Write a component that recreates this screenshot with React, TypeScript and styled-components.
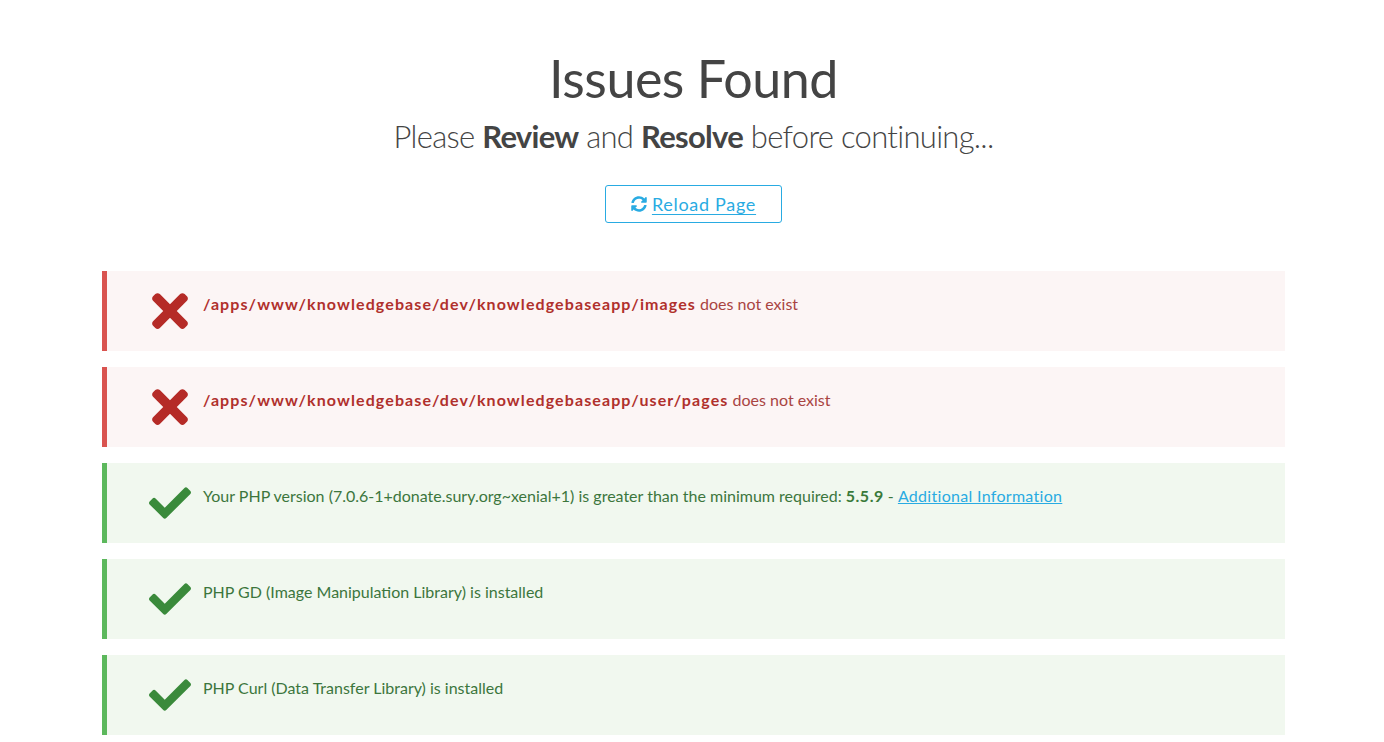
import React from "react";
import styled, { createGlobalStyle } from "styled-components";
import { FaTimes, FaCheck, FaSyncAlt } from "react-icons/fa";

const Global = createGlobalStyle`
  html, body { margin: 0; padding: 0; background: #fff; }
  body { font-family: "Lato", "Open Sans", sans-serif; color: #444; }
`;

const Page = styled.div`
  padding: 0 99px 40px 102px;
  display: flex;
  flex-direction: column;
  align-items: center;
`;

const Title = styled.h1`
  margin: 46px 0 0;
  font-family: "Lato", sans-serif;
  font-weight: 400;
  font-size: 52px;
  line-height: 64px;
  color: #444;
  letter-spacing: -0.5px;
`;

const Subtitle = styled.h2`
  margin: 6px 0 0;
  font-family: "Lato", sans-serif;
  font-weight: 300;
  font-size: 31px;
  line-height: 40px;
  color: #444;
  letter-spacing: -0.7px;
  b { font-weight: 700; }
`;

const ReloadButton = styled.a`
  margin-top: 29px;
  box-sizing: border-box;
  width: 177px;
  height: 38px;
  display: flex;
  align-items: center;
  justify-content: center;
  gap: 5px;
  border: 1px solid #29abe2;
  border-radius: 3px;
  color: #29abe2;
  font-size: 18px;
  letter-spacing: 0.7px;
  text-decoration: underline;
  text-underline-offset: 3px;
  text-decoration-thickness: 1px;
  svg { width: 16px; height: 16px; }
`;

const List = styled.div`
  align-self: stretch;
  margin-top: 48px;
  display: flex;
  flex-direction: column;
  gap: 16px;
`;

const Panel = styled.div<{ $ok: boolean }>`
  height: 80px;
  box-sizing: border-box;
  border-left: 5px solid ${(p) => (p.$ok ? "#5cb85c" : "#d9534f")};
  background: ${(p) => (p.$ok ? "#f1f8ef" : "#fcf5f5")};
  display: flex;
  align-items: stretch;
  padding-left: 32px;
  color: ${(p) => (p.$ok ? "#3c763d" : "#a94442")};
  font-size: 16px;
  line-height: 20px;
`;

const IconBox = styled.div<{ $ok: boolean }>`
  width: 62px;
  flex: none;
  display: flex;
  justify-content: center;
  align-items: center;
  color: ${(p) => (p.$ok ? "#3a8a3b" : "#b52b27")};
  svg {
    width: ${(p) => (p.$ok ? "42px" : "36px")};
    height: ${(p) => (p.$ok ? "42px" : "52px")};
  }
`;

const Message = styled.div`
  padding: 23px 0 0 2px;
  b { font-weight: 700; color: #b0302c; letter-spacing: 1.1px; }
  strong { font-weight: 700; color: #3a7a3a; letter-spacing: 0.5px; }
  a { color: #29abe2; text-decoration: underline; letter-spacing: 0.3px; }
`;

type Item = { ok: boolean; content: React.ReactNode };

const items: Item[] = [
  { ok: false, content: <><b>/apps/www/knowledgebase/dev/knowledgebaseapp/images</b> does not exist</> },
  { ok: false, content: <><b>/apps/www/knowledgebase/dev/knowledgebaseapp/user/pages</b> does not exist</> },
  {
    ok: true,
    content: (
      <>
        Your PHP version (7.0.6-1+donate.sury.org~xenial+1) is greater than the minimum required: <strong>5.5.9</strong> -{" "}
        <a href="#">Additional Information</a>
      </>
    ),
  },
  { ok: true, content: <>PHP GD (Image Manipulation Library) is installed</> },
  { ok: true, content: <>PHP Curl (Data Transfer Library) is installed</> },
];

export default function App() {
  return (
    <>
      <Global />
      <Page>
        <Title>Issues Found</Title>
        <Subtitle>
          Please <b>Review</b> and <b>Resolve</b> before continuing...
        </Subtitle>
        <ReloadButton href="#">
          <FaSyncAlt />
          <span>Reload Page</span>
        </ReloadButton>
        <List>
          {items.map((it, i) => (
            <Panel key={i} $ok={it.ok}>
              <IconBox $ok={it.ok}>{it.ok ? <FaCheck /> : <FaTimes />}</IconBox>
              <Message>{it.content}</Message>
            </Panel>
          ))}
        </List>
      </Page>
    </>
  );
}
